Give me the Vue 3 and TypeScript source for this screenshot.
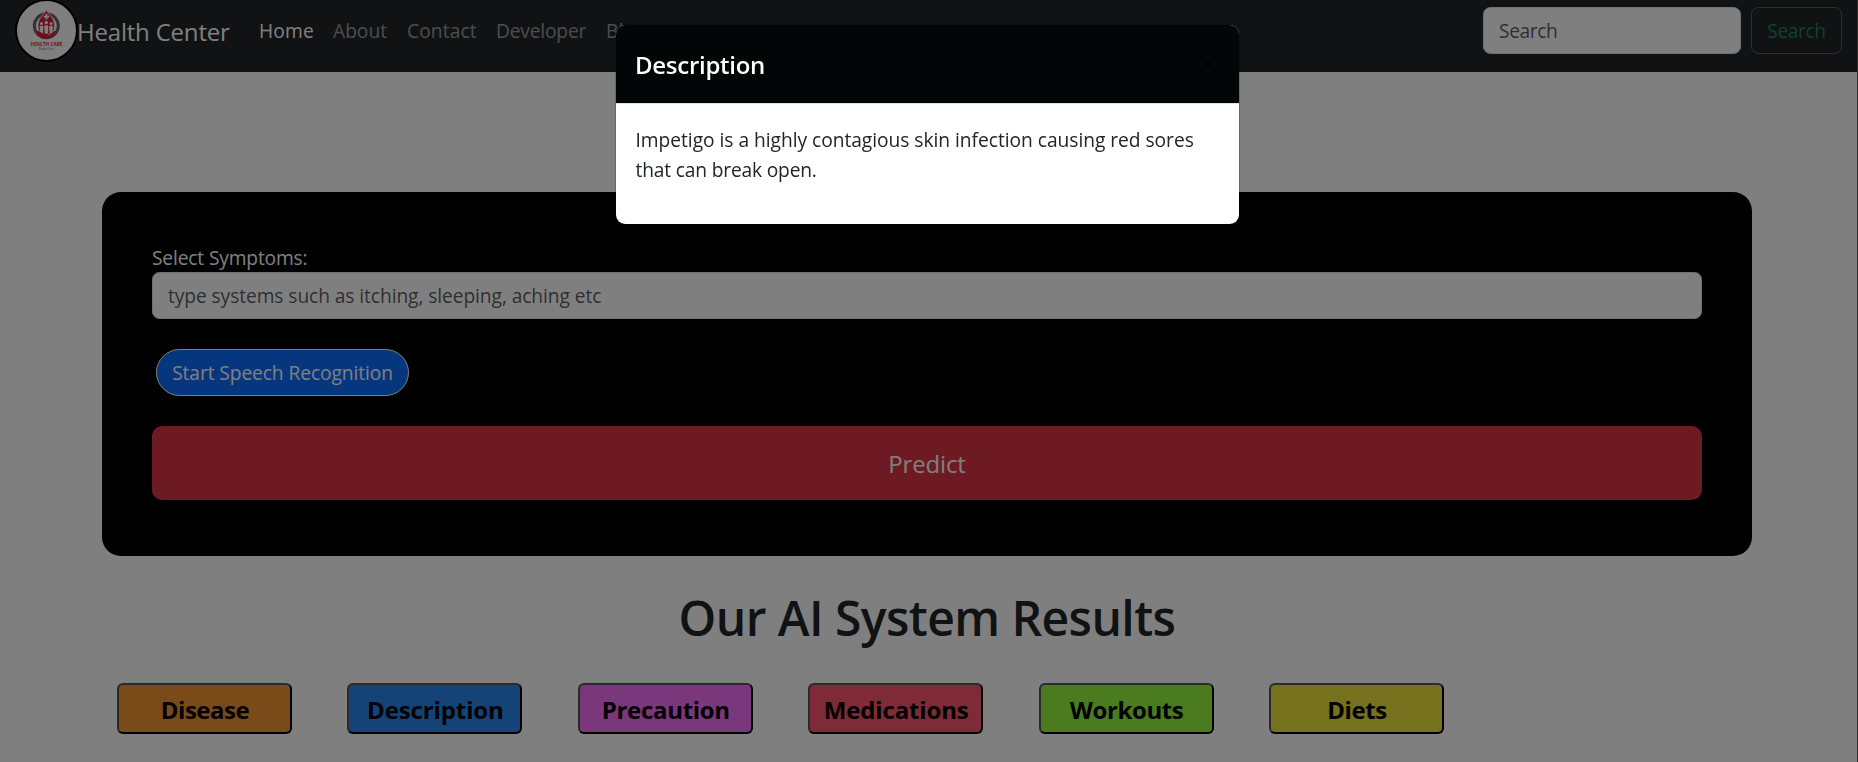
<script setup lang="ts">
interface NavLink {
  label: string
  name: string
}

interface ResultButton {
  label: string
  name: string
}

const navLinks: NavLink[] = [
  { label: 'Home', name: 'home' },
  { label: 'About', name: 'about' },
  { label: 'Contact', name: 'contact' },
  { label: 'Developer', name: 'developer' },
  { label: 'Blog', name: 'blog' },
]

const results: ResultButton[] = [
  { label: 'Disease', name: 'disease' },
  { label: 'Description', name: 'description' },
  { label: 'Precaution', name: 'precaution' },
  { label: 'Medications', name: 'medications' },
  { label: 'Workouts', name: 'workouts' },
  { label: 'Diets', name: 'diets' },
]
</script>

<template>
  <div class="page">
    <nav class="navbar">
      <a class="brand">
        <svg class="logo" width="63" height="63" viewBox="0 0 63 63">
          <circle cx="31.5" cy="31.5" r="30.5" fill="#fff" stroke="#000" stroke-width="2" />
          <circle cx="31.3" cy="26.8" r="12" fill="none" stroke="#62666c" stroke-width="3" />
          <path d="M31.3 10.6c1.600 4.400 8.400 8.200 8.400 16.600a8.400 9 0 0 1-16.800 0c0-8.400 6.800-12.200 8.400-16.600z" fill="#d91f36" stroke="#fff" stroke-width=".8" />
          <path d="M30.5 14.8h1.8v2h2v1.8h-2v2h-1.800v-2h-2v-1.800h2z" fill="#fff" />
          <g fill="#fff">
            <circle cx="31.3" cy="23.600" r="1.7" />
            <circle cx="26.5" cy="24.600" r="1.5" />
            <circle cx="36.1" cy="24.600" r="1.5" />
            <path d="M29.2 27c0-1.100 4.200-1.100 4.200 0l-.6 9h-3z" />
            <path d="M24.6 27.500c0-1.100 3.800-1.100 3.800 0l-.4 7h-2.600z" />
            <path d="M34.2 27.500c0-1.100 3.800-1.100 3.800 0l-.8 7h-2.600z" />
          </g>
          <path d="M20.3 31.200c3 .4 5.600 1.800 7.300 3.300h4.700c1.300.4.900 1.400-.300 1.600h2.200l5-4c1.600-.6 2.200.4 1.400 1.500-2 3-5 5.600-9.300 6.200-5.800.3-9.800-3.500-11-8.600z" fill="#d91f36" />
          <text class="logo-name" x="31.500" y="47.200" text-anchor="middle" textLength="32" lengthAdjust="spacingAndGlyphs">HEALTH CARE</text>
          <text class="logo-sub" x="31.300" y="50.900" text-anchor="middle" textLength="15" lengthAdjust="spacingAndGlyphs">Medical Clinic</text>
        </svg>
        <span class="brand-name">Health Center</span>
      </a>
      <div class="nav-links">
        <a v-for="link in navLinks" :key="link.name" class="nav-link" :class="link.name">{{ link.label }}</a>
      </div>
      <form class="search" @submit.prevent>
        <input class="field search-field" type="search" placeholder="Search" />
        <button class="search-button" type="submit">Search</button>
      </form>
    </nav>

    <main class="container">
      <form class="card" @submit.prevent>
        <label class="label" for="symptoms">Select Symptoms:</label>
        <input id="symptoms" class="field symptoms" type="text" placeholder="type systems such as itching, sleeping, aching etc" />
        <button class="speech" type="button">Start Speech Recognition</button>
        <button class="predict" type="submit">Predict</button>
      </form>
      <h1 class="heading">Our AI System Results</h1>
      <div class="results">
        <button v-for="item in results" :key="item.name" class="result" :class="item.name" type="button">{{ item.label }}</button>
      </div>
    </main>
  </div>

  <div class="backdrop"></div>

  <div class="modal-layer">
    <section class="modal" role="dialog" aria-modal="true">
      <header class="modal-header">
        <h5 class="modal-title">Description</h5>
        <button class="close" type="button" aria-label="Close">
          <svg width="20" height="20" viewBox="0 0 16 16">
            <path d="M.293.293a1 1 0 0 1 1.414 0L8 6.586 14.293.293a1 1 0 1 1 1.414 1.414L9.414 8l6.293 6.293a1 1 0 0 1-1.414 1.414L8 9.414l-6.293 6.293a1 1 0 0 1-1.414-1.414L6.586 8 .293 1.707a1 1 0 0 1 0-1.414z" />
          </svg>
        </button>
      </header>
      <div class="modal-body">
        <p>Impetigo is a highly contagious skin infection causing red sores <span class="second-line">that can break open.</span></p>
      </div>
    </section>
  </div>
</template>

<style>
html,
body {
  margin: 0;
  overflow: hidden;
  background: #fff;
}
</style>

<style scoped>
*,
*::before,
*::after {
  box-sizing: border-box;
}

.page,
.modal-layer {
  font-family: "Open Sans", "Noto Sans", sans-serif;
  font-size: 19.2px;
  line-height: 30px;
  color: #212529;
}

.page {
  height: 762px;
  overflow: hidden;
  border-right: 1px solid #606060;
  background: #fff;
}

button,
input {
  font: inherit;
  margin: 0;
}

.navbar {
  display: flex;
  align-items: flex-start;
  height: 72px;
  padding-right: 15px;
  background: #212529;
}

.brand {
  display: flex;
  width: 259px;
  padding-left: 15px;
  color: #fff;
}

.logo {
  flex: none;
  margin-top: -1px;
}

.logo-name {
  font: 700 5.4px "Open Sans", sans-serif;
  fill: #d91f36;
}

.logo-sub {
  font: 400 2.6px "Open Sans", sans-serif;
  fill: #555;
}

.brand-name {
  margin-left: -1px;
  padding-top: 17px;
  font-size: 24px;
  letter-spacing: -0.2px;
  white-space: nowrap;
}

.nav-links {
  display: grid;
  grid-template-columns: 74px 74px 89px 110px 60px;
  padding-top: 16px;
}

.nav-link {
  color: rgba(255, 255, 255, 0.55);
}

.nav-link.home {
  color: #fff;
  letter-spacing: 0.15px;
}

.nav-link.contact {
  letter-spacing: 0.12px;
}

.nav-link.developer {
  letter-spacing: -0.18px;
}

.search {
  display: flex;
  gap: 10px;
  margin-left: auto;
  padding-top: 7px;
}

.field {
  display: block;
  height: 47px;
  padding: 0 15px;
  border: 1px solid #dee2e6;
  border-radius: 7.5px;
  outline: none;
  background: #fff;
  color: #212529;
}

.field::placeholder {
  color: rgba(33, 37, 41, 0.75);
  opacity: 1;
}

.search-field {
  width: 258px;
  padding-bottom: 1px;
  letter-spacing: -0.38px;
  appearance: none;
}

.search-button {
  width: 91px;
  height: 47px;
  padding: 1px 0 0;
  border: 1px solid #198754;
  border-radius: 7.5px;
  background: transparent;
  color: #198754;
  letter-spacing: -0.38px;
}

.container {
  width: 1650px;
  margin-left: 102px;
  padding-top: 120px;
}

.card {
  display: flex;
  flex-direction: column;
  align-items: stretch;
  height: 364px;
  padding: 51px 50px 0;
  border-radius: 19px;
  background: #000;
}

.label {
  height: 29px;
  line-height: 30px;
  color: #fff;
  letter-spacing: -0.15px;
}

.symptoms {
  letter-spacing: -0.08px;
}

.speech {
  align-self: flex-start;
  width: 253px;
  height: 47px;
  margin: 30px 0 30px 4px;
  padding: 1px 0 0;
  border: 1px solid #fff;
  border-radius: 24px;
  background: #0d6efd;
  color: #fff;
  letter-spacing: -0.09px;
}

.predict {
  height: 74px;
  padding: 2px 0 0;
  border: 0;
  border-radius: 10px;
  background: #dc3545;
  color: #fff;
  font-size: 24px;
  letter-spacing: -0.16px;
}

.heading {
  margin: 32px 0 0;
  height: 60px;
  font-size: 48px;
  font-weight: 600;
  line-height: 60px;
  letter-spacing: -0.56px;
  text-align: center;
}

.results {
  display: flex;
  gap: 55.4px;
  margin: 35px 0 0 15px;
}

.result {
  flex: none;
  width: 175px;
  height: 51px;
  padding: 2px 0 0 1px;
  border: 2px solid #000;
  border-color: #545454 #000 #000 #545454;
  border-radius: 6px;
  color: #000;
  font-size: 24px;
  font-weight: 700;
  line-height: 36px;
}

.disease {
  background: #f69432;
  letter-spacing: -0.5px;
}

.description {
  background: #2888ee;
  letter-spacing: -0.12px;
}

.precaution {
  background: #f66ef6;
  letter-spacing: -0.3px;
}

.medications {
  background: #fc566e;
  letter-spacing: -0.15px;
}

.workouts {
  background: #94f63e;
  letter-spacing: -0.41px;
}

.diets {
  background: #eae23a;
  letter-spacing: -0.42px;
}

.backdrop,
.modal-layer {
  position: fixed;
  inset: 0;
}

.backdrop {
  background: rgba(0, 0, 0, 0.5);
}

.modal-layer {
  padding: 24px 0 0 615px;
}

.modal {
  width: 625px;
  height: 201px;
  overflow: hidden;
  border: 1px solid rgba(0, 0, 0, 0.175);
  border-radius: 10px;
  background: #fff;
  background-clip: padding-box;
}

.modal-header {
  display: flex;
  align-items: center;
  justify-content: space-between;
  height: 79px;
  padding: 0 20px;
  border-bottom: 1px solid #dee2e6;
  background: #020606;
}

.modal-title {
  margin: 2px 0 0 -1px;
  color: #fff;
  font-size: 24px;
  font-weight: 600;
  letter-spacing: -0.28px;
}

.close {
  display: flex;
  padding: 0;
  border: 0;
  background: none;
  opacity: 0.5;
}

.modal-body {
  padding: 21px 20px 21px 19.5px;
}

.modal-body p {
  margin: 0;
  letter-spacing: -0.03px;
}

.second-line {
  letter-spacing: -0.17px;
}
</style>
